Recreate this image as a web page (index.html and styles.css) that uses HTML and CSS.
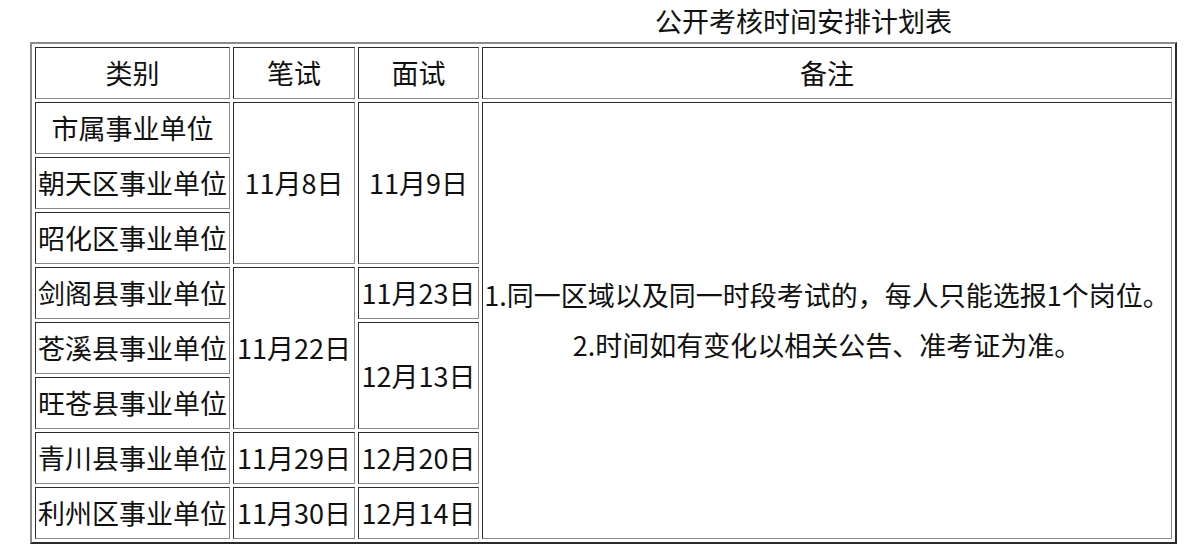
FILE: index.html
```html
<!DOCTYPE html>
<html lang="zh-CN">
<head>
<meta charset="utf-8">
<title>公开考核时间安排计划表</title>
<link rel="stylesheet" href="styles.css">
</head>
<body>
<div class="title">公开考核时间安排计划表</div>
<table class="plan">
  <tr>
    <td class="c1">类别</td>
    <td class="c2">笔试</td>
    <td class="c3">面试</td>
    <td class="c4">备注</td>
  </tr>
  <tr>
    <td>市属事业单位</td>
    <td rowspan="3">11月8日</td>
    <td rowspan="3">11月9日</td>
    <td rowspan="8" class="notes">1.同一区域以及同一时段考试的，每人只能选报1个岗位。<br>2.时间如有变化以相关公告、准考证为准。</td>
  </tr>
  <tr>
    <td>朝天区事业单位</td>
  </tr>
  <tr>
    <td>昭化区事业单位</td>
  </tr>
  <tr>
    <td>剑阁县事业单位</td>
    <td rowspan="3">11月22日</td>
    <td>11月23日</td>
  </tr>
  <tr>
    <td>苍溪县事业单位</td>
    <td rowspan="2">12月13日</td>
  </tr>
  <tr>
    <td>旺苍县事业单位</td>
  </tr>
  <tr>
    <td>青川县事业单位</td>
    <td>11月29日</td>
    <td>12月20日</td>
  </tr>
  <tr>
    <td>利州区事业单位</td>
    <td>11月30日</td>
    <td>12月14日</td>
  </tr>
</table>
</body>
</html>
```

FILE: styles.css
```css
html, body {
  margin: 0;
  padding: 0;
  background: #ffffff;
}

body {
  font-family: "Noto Sans CJK SC", "Noto Sans", sans-serif;
  color: #111111;
}

.title {
  height: 42px;
  line-height: 42px;
  font-size: 27px;
  padding-left: 655px;
  white-space: nowrap;
}

.plan {
  margin-left: 30px;
  width: 1147px;
  table-layout: fixed;
  border-collapse: separate;
  border-spacing: 3px;
  border: 2px solid;
  border-color: #8a8a8a #2a2a2a #2a2a2a #8a8a8a;
  font-size: 27px;
}

.plan td {
  height: 50px;
  padding: 0;
  border: 1px solid;
  border-color: #2a2a2a #8a8a8a #8a8a8a #2a2a2a;
  text-align: center;
  vertical-align: middle;
  white-space: nowrap;
  line-height: 36px;
}

.c1 { width: 193px; }
.c2 { width: 120px; }
.c3 { width: 119px; }
.c4 { width: 688px; }

.plan td.notes {
  line-height: 50px;
  padding-bottom: 2px;
}
```
